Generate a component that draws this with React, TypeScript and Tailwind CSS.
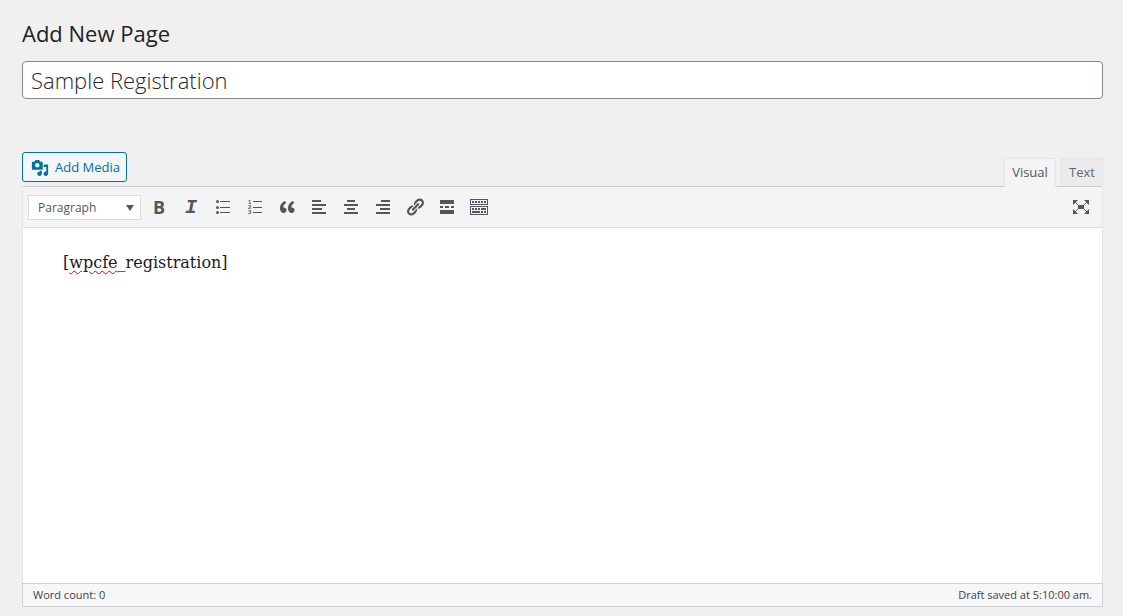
import type { ReactNode } from 'react';

function Icon({ children, className = 'h-5 w-5' }: { children: ReactNode; className?: string }) {
  return (
    <svg viewBox="0 0 20 20" fill="currentColor" aria-hidden="true" className={className}>
      {children}
    </svg>
  );
}

const tools = [
  {
    label: 'Bold',
    icon: <span className="font-['Open_Sans',sans-serif] text-lg leading-5 font-bold">B</span>,
  },
  {
    label: 'Italic',
    icon: <span className="pt-[2px] font-['Liberation_Mono',monospace] text-xl leading-5 font-bold italic">I</span>,
  },
  {
    label: 'Bulleted list',
    icon: (
      <Icon>
        <circle cx="4.5" cy="4.5" r="1.5" />
        <circle cx="4.5" cy="10.5" r="1.5" />
        <circle cx="4.5" cy="15.5" r="1.5" />
        <path d="M7 4h10v1H7zM7 10h10v1H7zM7 15h10v1H7z" />
      </Icon>
    ),
  },
  {
    label: 'Numbered list',
    icon: (
      <Icon>
        <g fontFamily="Liberation Sans, sans-serif" fontSize="6" fontWeight="bold">
          <text x="3" y="7">1</text>
          <text x="3" y="12">2</text>
          <text x="3" y="17">3</text>
        </g>
        <path d="M8 4h9v1H8zM8 10h9v1H8zM8 15h9v1H8z" />
      </Icon>
    ),
  },
  {
    label: 'Blockquote',
    icon: (
      <Icon>
        <path d="M9.49 13.22c0-.74-.2-1.38-.61-1.9-.62-.78-1.83-.88-2.53-.72-.29-1.65 1.11-3.75 2.92-4.65L7.88 4c-2.73 1.3-5.42 4.28-4.96 8.05C3.21 14.43 4.59 16 6.54 16c.85 0 1.56-.25 2.12-.75s.83-1.18.83-2.03zm8.05 0c0-.74-.2-1.38-.61-1.9-.63-.78-1.83-.88-2.53-.72-.29-1.65 1.11-3.75 2.92-4.65L15.93 4c-2.73 1.3-5.41 4.28-4.95 8.05.29 2.38 1.66 3.95 3.61 3.95.85 0 1.56-.25 2.12-.75s.83-1.18.83-2.03z" />
      </Icon>
    ),
  },
  {
    label: 'Align left',
    icon: (
      <Icon>
        <path d="M12 5V3H3v2h9zm5 4V7H3v2h14zm-4 4v-2H3v2h10zm4 4v-2H3v2h14z" />
      </Icon>
    ),
  },
  {
    label: 'Align center',
    icon: (
      <Icon>
        <path d="M14 5V3H6v2h8zm3 4V7H3v2h14zm-3 4v-2H6v2h8zm3 4v-2H3v2h14z" />
      </Icon>
    ),
  },
  {
    label: 'Align right',
    icon: (
      <Icon>
        <path d="M17 5V3H8v2h9zm0 4V7H3v2h14zm0 4v-2H7v2h10zm0 4v-2H3v2h14z" />
      </Icon>
    ),
  },
  {
    label: 'Insert link',
    icon: (
      <Icon>
        <path d="M17.74 2.76c1.68 1.69 1.68 4.41 0 6.1l-1.53 1.52c-1.12 1.12-2.7 1.47-4.14 1.09l2.62-2.61.76-.77.76-.76c.84-.84.84-2.2 0-3.04-.84-.85-2.2-.85-3.04 0l-.77.76-3.38 3.38c-.37-1.44-.02-3.02 1.1-4.14l1.52-1.53c1.69-1.68 4.42-1.68 6.1 0zM8.59 13.43l5.34-5.34c.42-.42.42-1.1 0-1.52-.44-.43-1.13-.39-1.53 0l-5.33 5.34c-.42.42-.42 1.1 0 1.52.44.43 1.13.39 1.52 0zm-.76 2.29l4.14-4.15c.38 1.44.03 3.02-1.09 4.14l-1.52 1.53c-1.69 1.68-4.41 1.68-6.1 0-1.68-1.68-1.68-4.42 0-6.1l1.53-1.52c1.12-1.12 2.7-1.47 4.14-1.1l-4.14 4.15c-.85.84-.85 2.2 0 3.05.84.84 2.2.84 3.04 0z" />
      </Icon>
    ),
  },
  {
    label: 'Insert Read More tag',
    icon: (
      <Icon>
        <path d="M17 7V3H3v4h14zM6 11V9H3v2h3zm6 0V9H8v2h4zm5 0V9h-3v2h3zm0 6v-4H3v4h14z" />
      </Icon>
    ),
  },
  {
    label: 'Toolbar Toggle',
    icon: (
      <Icon>
        <path d="M19 2v6H1V2h18zm-1 5V3H2v4h16zM5 4v2H3V4h2zm3 0v2H6V4h2zm3 0v2H9V4h2zm3 0v2h-2V4h2zm3 0v2h-2V4h2zm2 5v9H1V9h18zm-1 8v-7H2v7h16zM5 11v2H3v-2h2zm3 0v2H6v-2h2zm3 0v2H9v-2h2zm6 0v2h-5v-2h5zm-6 3v2H3v-2h8zm3 0v2h-2v-2h2zm3 0v2h-2v-2h2z" />
      </Icon>
    ),
  },
];

function ToolButton({ label, children }: { label: string; children: ReactNode }) {
  return (
    <button
      type="button"
      aria-label={label}
      className="flex h-7 w-7 items-center justify-center rounded-xs text-[#50575e] hover:bg-white"
    >
      {children}
    </button>
  );
}

function Toolbar() {
  return (
    <div className="flex h-[42px] items-center gap-1 border-y border-t-[#ccc] border-b-[#ddd] bg-[#f4f4f4] px-[5px]">
      <div className="relative">
        <select
          aria-label="Block format"
          className="block h-[25px] w-[113px] appearance-none border border-[#ddd] bg-white pt-px pl-[9px] text-xs text-[#50575e]"
        >
          <option>Paragraph</option>
          <option>Heading 1</option>
          <option>Heading 2</option>
          <option>Preformatted</option>
        </select>
        <svg
          viewBox="0 0 8 6"
          fill="currentColor"
          aria-hidden="true"
          className="pointer-events-none absolute top-[10px] right-[7px] h-[6px] w-2 text-[#50575e]"
        >
          <path d="M0 0h8L4 6z" />
        </svg>
      </div>
      {tools.map((tool) => (
        <ToolButton key={tool.label} label={tool.label}>
          {tool.icon}
        </ToolButton>
      ))}
      <div className="ml-auto pr-[2px]">
        <ToolButton label="Distraction-free writing mode">
          <Icon>
            <path d="M7 8h6v4H7z" />
            <path d="M2 3h5L2 8zM18 3v5l-5-5zM2 17v-5l5 5zM18 17h-5l5-5z" />
            <path d="M3 4l5 5M17 4l-5 5M3 16l5-5M17 16l-5-5" stroke="currentColor" />
          </Icon>
        </ToolButton>
      </div>
    </div>
  );
}

export default function App() {
  return (
    <main className="flex min-h-screen flex-col bg-[#f0f0f0] pt-[18px] pr-5 pb-[9px] pl-[22px] font-['Open_Sans','Noto_Sans',sans-serif] text-[13px] text-[#3c434a]">
      <h1 className="text-[22px] leading-[30px] text-[#1d2327]">Add New Page</h1>
      <input
        type="text"
        aria-label="Page title"
        defaultValue="Sample Registration"
        className="mt-[13px] h-[38px] w-full rounded-sm border border-[#7e8993] bg-white px-2 text-[22px] font-light text-[#23282d]"
      />

      <div className="mt-[53px] flex items-end justify-between">
        <button
          type="button"
          className="mb-1 flex h-[30px] items-center gap-[6px] rounded-[3px] border border-[#0071a1] bg-[#f3f5f6] pt-px pr-[6px] pl-2 text-[13px] text-[#0071a1]"
        >
          <Icon className="h-[18px] w-[18px]">
            <path d="M13 11V4c0-.55-.45-1-1-1h-1.67L9 1H5L3.67 3H2c-.55 0-1 .45-1 1v7c0 .55.45 1 1 1h10c.55 0 1-.45 1-1zM7 4.5c1.38 0 2.5 1.12 2.5 2.5S8.38 9.5 7 9.5 4.5 8.38 4.5 7 5.62 4.5 7 4.5zM14 6h5v10.5c0 1.38-1.12 2.5-2.5 2.5S14 17.88 14 16.5s1.12-2.5 2.5-2.5c.17 0 .34.02.5.05V9h-3V6zm-4 8.05V13h2v3.5c0 1.38-1.12 2.5-2.5 2.5S7 17.88 7 16.5 8.12 14 9.5 14c.17 0 .34.02.5.05z" />
          </Icon>
          Add Media
        </button>
        <div className="flex gap-[5px]">
          <button
            type="button"
            className="z-10 -mb-px h-[29px] w-[52px] border border-b-0 border-[#e5e5e5] bg-[#f4f4f4] text-[13px] text-[#50575e]"
          >
            Visual
          </button>
          <button
            type="button"
            className="h-7 w-[42px] border border-b-0 border-[#e5e5e5] bg-[#ebebeb] text-[13px] text-[#646970]"
          >
            Text
          </button>
        </div>
      </div>

      <section className="flex flex-1 flex-col">
        <div className="flex flex-1 flex-col border-x border-[#e5e5e5] bg-white">
          <Toolbar />
          <div
            role="textbox"
            aria-label="Page content"
            aria-multiline="true"
            contentEditable
            suppressContentEditableWarning
            spellCheck={false}
            className="flex-1 px-10 py-[21px] font-['DejaVu_Serif',serif] text-base leading-7 text-[#1a1a1a] outline-none"
          >
            <p>
              [
              <span className="underline decoration-red-600 decoration-wavy decoration-1 underline-offset-2">
                wpcfe
              </span>
              _registration]
            </p>
          </div>
        </div>
        <footer className="flex h-6 items-center justify-between border border-[#ccd0d4] bg-[#f7f7f7] px-[10px] pt-px text-[11px]">
          <span>Word count: 0</span>
          <span>Draft saved at 5:10:00 am.</span>
        </footer>
      </section>
    </main>
  );
}
